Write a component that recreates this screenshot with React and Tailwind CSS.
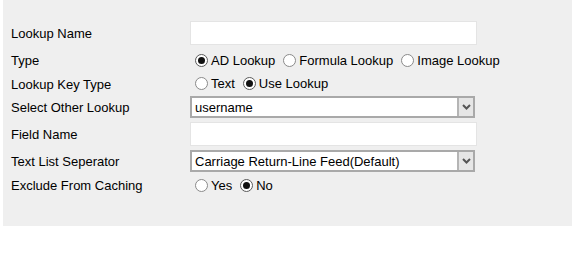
import React from 'react';

const font = { fontFamily: '"Liberation Sans", Arial, sans-serif' };

function Radio({ checked, label }) {
  return (
    <label className="inline-flex items-center mr-[3px]">
      <span
        className={`ml-[5px] mr-[3px] w-[13px] h-[13px] rounded-full bg-white inline-flex items-center justify-center border ${
          checked ? 'border-[#5a5a5a]' : 'border-[#8a8a8a]'
        }`}
      >
        {checked && <span className="w-[7px] h-[7px] rounded-full bg-[#111]" />}
      </span>
      <span className="pt-[1px]">{label}</span>
    </label>
  );
}

function TextBox() {
  return <div className="w-[287px] h-[24px] bg-white border border-[#e4e4e4]" />;
}

function Select({ value }) {
  return (
    <div className="w-[285px] h-[22px] bg-white border-2 border-[#a9a9a9] flex">
      <div className="flex-1 pl-[3px] pt-[1px] flex items-center leading-none">{value}</div>
      <div className="w-[16px] bg-[#e6e6e6] border-l-2 border-[#b5b5b5] flex items-center justify-center">
        <svg width="9" height="6" viewBox="0 0 9 6">
          <path d="M1 1 L4.5 4.5 L8 1" fill="none" stroke="#555" strokeWidth="2" />
        </svg>
      </div>
    </div>
  );
}

function Row({ label, h, children }) {
  return (
    <div className="flex items-center" style={{ height: h }}>
      <div className="w-[179px] shrink-0 pt-[2px]">{label}</div>
      <div className="flex items-center">{children}</div>
    </div>
  );
}

export default function App() {
  return (
    <div className="w-[572px] h-[256px] bg-white pl-[3px]" style={font}>
      <div className="h-[226px] bg-[#efefef] pl-[8px] pt-[18px] text-[13px] text-black">
        <Row label="Lookup Name" h={30}>
          <TextBox />
        </Row>
        <Row label="Type" h={24}>
          <Radio checked label="AD Lookup" />
          <Radio label="Formula Lookup" />
          <Radio label="Image Lookup" />
        </Row>
        <Row label="Lookup Key Type" h={23}>
          <Radio label="Text" />
          <Radio checked label="Use Lookup" />
        </Row>
        <Row label="Select Other Lookup" h={24}>
          <Select value="username" />
        </Row>
        <Row label="Field Name" h={30}>
          <TextBox />
        </Row>
        <Row label="Text List Seperator" h={24}>
          <Select value="Carriage Return-Line Feed(Default)" />
        </Row>
        <Row label="Exclude From Caching" h={24}>
          <Radio label="Yes" />
          <Radio checked label="No" />
        </Row>
      </div>
    </div>
  );
}
